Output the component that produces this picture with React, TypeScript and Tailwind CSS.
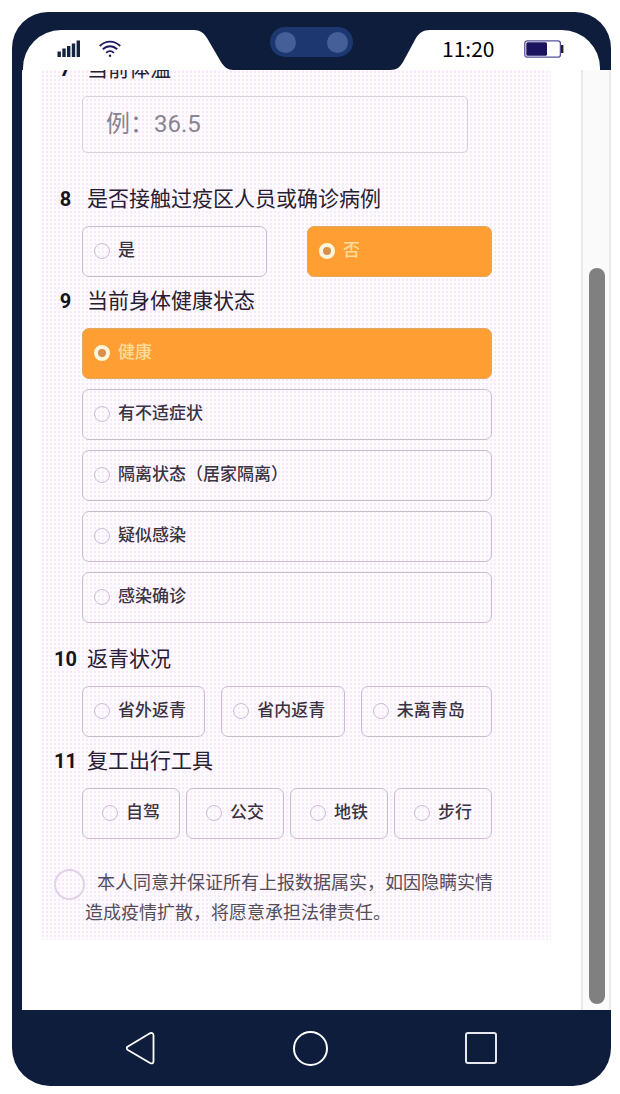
import { ReactNode } from 'react'

const FONT = "font-['Roboto','Noto_Sans_CJK_SC',sans-serif]"

const HEALTH_OPTIONS = ['健康', '有不适症状', '隔离状态（居家隔离）', '疑似感染', '感染确诊']
const RETURN_OPTIONS = ['省外返青', '省内返青', '未离青岛']
const TRAVEL_OPTIONS = ['自驾', '公交', '地铁', '步行']

function SignalIcon() {
  return (
    <svg width="24" height="18" viewBox="0 0 24 18" fill="#14233f" aria-hidden="true">
      <rect x="0.5" y="11.5" width="3.4" height="5.5" />
      <rect x="5.3" y="8.5" width="3.4" height="8.5" />
      <rect x="10" y="6" width="3.4" height="11" />
      <rect x="14.8" y="3.5" width="3.4" height="13.5" />
      <rect x="19.6" y="0.5" width="3.4" height="16.5" />
    </svg>
  )
}

function WifiIcon() {
  return (
    <svg width="22" height="18" viewBox="0 0 22 18" fill="none" stroke="#211a63" strokeWidth="1.9" aria-hidden="true">
      <path d="M0.8 6C6.6 0.1 15.4 0.1 21.2 6" />
      <path d="M3.8 9.3C8 5.2 14 5.2 18.2 9.3" />
      <path d="M7.2 12.8C9.4 10.6 12.6 10.6 14.8 12.8" />
      <circle cx="11" cy="15.8" r="1.2" fill="#211a63" stroke="none" />
    </svg>
  )
}

function BatteryIcon() {
  return (
    <svg width="40" height="18" viewBox="0 0 40 18" aria-hidden="true">
      <rect x="0.8" y="0.8" width="35.6" height="16.4" rx="2.5" fill="#fff" stroke="#56509a" strokeWidth="1.3" />
      <rect x="2.3" y="2.3" width="20.7" height="13.4" rx="1.5" fill="#1b155f" />
      <rect x="37" y="5" width="2.4" height="8" fill="#222" />
    </svg>
  )
}

function StatusBar() {
  return (
    <header className="flex h-[58px] justify-between rounded-t-[36px] bg-[#0e1d3c] px-[11px] pt-[18px]">
      <div className="flex">
        <div className="flex w-[167px] items-center gap-[18px] rounded-tl-[38px] bg-white pb-[2px] pl-[34px]">
          <SignalIcon />
          <WifiIcon />
        </div>
        <svg width="43" height="40" viewBox="0 0 43 40" fill="#fff" aria-hidden="true">
          <path d="M0 0H4C10 0 14 3 17 8L31 32C34 37 38 40 43 40H0Z" />
        </svg>
      </div>
      {/* Front cameras */}
      <div className="-mt-[3px] flex h-[30px] w-[83px] items-center justify-between rounded-full bg-[#1d3871] px-[5px]">
        <span className="size-[21px] rounded-full bg-[#455f98]" />
        <span className="size-[21px] rounded-full bg-[#455f98]" />
      </div>
      <div className="flex">
        <svg width="40" height="40" viewBox="0 0 40 40" fill="#fff" aria-hidden="true">
          <path d="M40 0C33 0 29 3 26 8L13 32C10 37 7 40 0 40H40Z" />
        </svg>
        <div className="flex w-[170px] items-center justify-between rounded-tr-[38px] bg-white pb-[2px] pr-9 pl-3">
          <time className="pb-[3px] font-['Noto_Sans_CJK_SC',sans-serif] text-[21px] leading-8 text-black">11:20</time>
          <BatteryIcon />
        </div>
      </div>
    </header>
  )
}

function TitleText({ no, children }: { no: number; children: ReactNode }) {
  return (
    <span className="flex h-[51px] items-center pb-1 text-[21px] leading-8 text-[#262030]">
      <span className="mr-[10px] w-[23px] text-center text-xl font-bold text-[#17131c]">{no}</span>
      {children}
    </span>
  )
}

interface OptionProps {
  name: string
  label: string
  checked?: boolean
  className?: string
}

function Option({ name, label, checked, className = 'pl-[11px]' }: OptionProps) {
  return (
    <label
      className={`flex h-[51px] items-center gap-2 rounded-[7px] border border-[#c9bccf] pb-[2px] text-[17px] font-medium text-[#3a3342] has-[:checked]:border-[#e0a860] has-[:checked]:bg-[#ff9f33] has-[:checked]:text-[#ffdb9c] ${className}`}
    >
      <input
        type="radio"
        name={name}
        defaultChecked={checked}
        className="size-4 shrink-0 appearance-none rounded-full border border-[#cdbbd6] checked:border-4 checked:border-[#fff5dc] checked:bg-[#d8904a]"
      />
      <span>{label}</span>
    </label>
  )
}

function Form() {
  return (
    <form className="mr-[30px] ml-[19px] flex-1 self-start bg-[#fefbff] bg-[radial-gradient(#fae6ff_1px,transparent_1px)] bg-[length:4px_4px] pr-[59px] pb-3 pl-[13px]">
      <div className="-mt-[25px]">
        <label htmlFor="temperature">
          <TitleText no={7}>当前体温</TitleText>
        </label>
        <div className="mb-[22px] pr-6 pl-7">
          <input
            id="temperature"
            type="text"
            placeholder="例：36.5"
            className="h-[57px] w-full rounded-[5px] border border-[#ddd0dd] pb-px pl-[23px] text-2xl placeholder:text-[#8b838e]"
          />
        </div>
      </div>

      <fieldset>
        <legend>
          <TitleText no={8}>是否接触过疫区人员或确诊病例</TitleText>
        </legend>
        <div className="grid grid-cols-2 gap-10 pl-7">
          <Option name="contact" label="是" />
          <Option name="contact" label="否" checked />
        </div>
      </fieldset>

      <fieldset className="mb-3">
        <legend>
          <TitleText no={9}>当前身体健康状态</TitleText>
        </legend>
        <div className="flex flex-col gap-[10px] pl-7">
          {HEALTH_OPTIONS.map((label, i) => (
            <Option key={label} name="health" label={label} checked={i === 0} />
          ))}
        </div>
      </fieldset>

      <fieldset>
        <legend>
          <TitleText no={10}>返青状况</TitleText>
        </legend>
        <div className="grid grid-cols-[123fr_123fr_131fr] gap-4 pl-7">
          {RETURN_OPTIONS.map(label => (
            <Option key={label} name="return" label={label} />
          ))}
        </div>
      </fieldset>

      <fieldset>
        <legend>
          <TitleText no={11}>复工出行工具</TitleText>
        </legend>
        <div className="grid grid-cols-4 gap-[6px] pl-7">
          {TRAVEL_OPTIONS.map(label => (
            <Option key={label} name="travel" label={label} className="justify-center" />
          ))}
        </div>
      </fieldset>

      <label className="-mr-1 mt-[29px] flex items-start text-[18px] leading-[30px] text-[#554d58]">
        <input
          type="checkbox"
          className="mt-px size-[31px] shrink-0 appearance-none rounded-full border-2 border-[#e2d3e8] checked:bg-[#ff9f33]"
        />
        <span className="indent-3">本人同意并保证所有上报数据属实，如因隐瞒实情造成疫情扩散，将愿意承担法律责任。</span>
      </label>
    </form>
  )
}

function NavBar() {
  return (
    <nav className="flex h-[76px] items-center justify-between rounded-b-[38px] bg-[#0e1d3c] px-[114px]">
      <button type="button" aria-label="返回">
        <svg width="30" height="40" viewBox="2 0 30 40" fill="none" stroke="#fff" strokeWidth="1.8" strokeLinejoin="round">
          <path d="M3.5 18.7L25.5 5.4Q29.500 4 29.500 7.500V33Q29.500 36.500 26 35L3.500 21.700Q2 20.200 3.500 18.700Z" />
        </svg>
      </button>
      <button type="button" aria-label="主页" className="size-[35px] rounded-full border-2 border-white" />
      <button type="button" aria-label="最近任务" className="size-8 rounded-[3px] border-2 border-[#e6e8ee]" />
    </nav>
  )
}

export default function App() {
  return (
    <div className={`min-h-screen bg-white pt-3 pr-[9px] pb-2 pl-3 ${FONT}`}>
      <StatusBar />
      <main className="flex overflow-hidden border-l-[10px] border-[#0e1d3c] bg-white">
        <div className="flex flex-1 pb-[70px]">
          <Form />
        </div>
        {/* Scrollbar */}
        <div className="flex w-[30px] border-x-2 border-[#e8e8e8] bg-[#fafafa] pt-[198px] pr-1 pb-[6px] pl-[6px]">
          <div className="flex-1 rounded-full bg-[#808080]" />
        </div>
      </main>
      <NavBar />
    </div>
  )
}
